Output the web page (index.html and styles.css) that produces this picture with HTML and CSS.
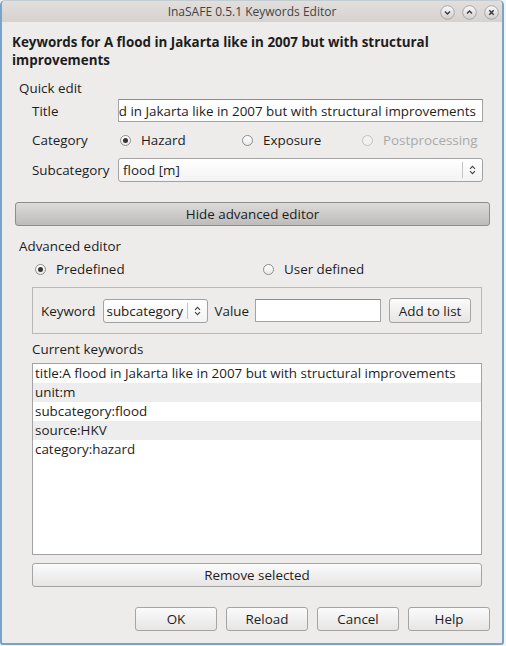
FILE: index.html
```html
<!DOCTYPE html>
<html>
<head>
<meta charset="utf-8">
<link rel="stylesheet" href="styles.css">
</head>
<body>
<div class="window">
  <div class="titlebar">
    <span></span>
    <span class="wtitle">InaSAFE 0.5.1 Keywords Editor</span>
    <div class="wbtns">
      <svg class="wbtn" width="15" height="15" viewBox="0 0 15 15"><defs><linearGradient id="g" x1="0" y1="0" x2="0" y2="1"><stop offset="0" stop-color="#fbfbfb"/><stop offset="1" stop-color="#cfcdcb"/></linearGradient></defs><circle cx="7.5" cy="7.5" r="6.8" fill="url(#g)" stroke="#a9a7a5"/><path d="M5 6.5 L7.5 9 L10 6.5" fill="none" stroke="#3a3a3a" stroke-width="1.4"/></svg>
      <svg class="wbtn" width="15" height="15" viewBox="0 0 15 15"><circle cx="7.5" cy="7.5" r="6.8" fill="url(#g)" stroke="#a9a7a5"/><path d="M5 8.5 L7.5 6 L10 8.5" fill="none" stroke="#3a3a3a" stroke-width="1.4"/></svg>
      <svg class="wbtn" width="15" height="15" viewBox="0 0 15 15"><circle cx="7.5" cy="7.5" r="6.8" fill="url(#g)" stroke="#a9a7a5"/><path d="M5.3 5.3 L9.7 9.7 M9.7 5.3 L5.3 9.7" fill="none" stroke="#3a3a3a" stroke-width="1.5"/></svg>
    </div>
  </div>
  <div class="body">
    <div class="heading">Keywords for A flood in Jakarta like in 2007 but with structural improvements</div>
    <div class="section">Quick edit</div>
    <div class="row first">
      <span class="lbl">Title</span>
      <div class="textfield"><span>title:A flood in Jakarta like in 2007 but with structural improvements</span></div>
    </div>
    <div class="row cat">
      <span class="lbl">Category</span>
      <div class="radios">
        <span class="ritem"><span class="radio on"></span>Hazard</span>
        <span class="ritem"><span class="radio"></span>Exposure</span>
        <span class="ritem disabled"><span class="radio"></span>Postprocessing</span>
      </div>
    </div>
    <div class="row sub">
      <span class="lbl">Subcategory</span>
      <div class="combo wide-combo"><span class="cval">flood [m]</span><span class="spin"><svg width="7" height="10" viewBox="0 0 7 10"><path d="M1 3.8 L3.5 1.3 L6 3.8 M1 6.2 L3.5 8.7 L6 6.2" fill="none" stroke="#444" stroke-width="1.1"/></svg></span></div>
    </div>
    <div class="btn toggle">Hide advanced editor</div>
    <div class="section adv">Advanced editor</div>
    <div class="advradios">
      <span class="ritem"><span class="radio on"></span>Predefined</span>
      <span class="ritem"><span class="radio"></span>User defined</span>
    </div>
    <div class="group">
      <span>Keyword</span>
      <div class="combo kcombo"><span class="cval">subcategory</span><span class="spin"><svg width="7" height="10" viewBox="0 0 7 10"><path d="M1 3.8 L3.5 1.3 L6 3.8 M1 6.2 L3.5 8.7 L6 6.2" fill="none" stroke="#444" stroke-width="1.1"/></svg></span></div>
      <span>Value</span>
      <div class="textfield vfield"></div>
      <div class="btn addbtn">Add to list</div>
    </div>
    <div class="sublabel">Current keywords</div>
    <div class="list">
      <div class="item">title:A flood in Jakarta like in 2007 but with structural improvements</div>
      <div class="item alt">unit:m</div>
      <div class="item">subcategory:flood</div>
      <div class="item alt">source:HKV</div>
      <div class="item">category:hazard</div>
    </div>
    <div class="btn remove">Remove selected</div>
    <div class="footer">
      <div class="btn fbtn">OK</div>
      <div class="btn fbtn">Reload</div>
      <div class="btn fbtn">Cancel</div>
      <div class="btn fbtn">Help</div>
    </div>
  </div>
</div>
</body>
</html>
```
FILE: styles.css
```css
* { box-sizing: border-box; }
html, body { margin: 0; padding: 0; }
body {
  width: 506px;
  height: 646px;
  overflow: hidden;
  background: #f4f4f4;
  font-family: "Open Sans", "Noto Sans", sans-serif;
  font-size: 13.4px;
  color: #1d1d1d;
}
.window {
  width: 504px;
  height: 645px;
  border: 2px solid #76a4ca;
  border-top: 1px solid #c4ccd3;
  border-radius: 5px 5px 3px 3px;
  background: #edeceb;
  display: flex;
  flex-direction: column;
  overflow: hidden;
}
.titlebar {
  height: 21px;
  flex: none;
  background: linear-gradient(#e1dedb, #d5d2cf);
  display: grid;
  grid-template-columns: 1fr auto 1fr;
  align-items: center;
}
.wtitle { font-size: 12px; color: #444; }
.wbtns { justify-self: end; display: flex; gap: 7px; margin-right: 3px; margin-top: 1px; }
.wbtn { display: block; }
.body { flex: 1; display: flex; flex-direction: column; }
.heading {
  font-weight: bold;
  line-height: 18px;
  margin: 11px 20px 0 10px;
}
.section { margin: 10px 0 0 17px; line-height: 18px; }
.row { display: flex; align-items: center; margin: 7px 19px 0 30px; }
.row.first { margin-top: 2px; height: 23px; }
.row.cat { height: 22px; }
.row.sub { height: 24px; }
.lbl { width: 86px; flex: none; }
.textfield {
  flex: 1;
  height: 23px;
  background: #fff;
  border: 1px solid #a3a3a3;
  border-top-color: #8e8e8e;
  display: flex;
  align-items: center;
  justify-content: flex-end;
  overflow: hidden;
  white-space: nowrap;
  padding: 0 6px 0 2px;
}
.textfield span { flex: none; }
.radios {
  display: grid;
  grid-template-columns: 122px 120px 1fr;
  margin-left: 2px;
}
.ritem { display: flex; align-items: center; gap: 10px; }
.ritem.disabled { color: #a9a9a9; }
.radio {
  flex: none;
  width: 11px;
  height: 11px;
  border-radius: 50%;
  border: 1px solid #8d8d8d;
  background: linear-gradient(#ffffff, #e9e9e9);
  display: flex;
  align-items: center;
  justify-content: center;
}
.ritem.disabled .radio { border-color: #c2c2c2; background: #f1f1f0; }
.radio.on::after {
  content: "";
  width: 5px;
  height: 5px;
  border-radius: 50%;
  background: #353535;
}
.combo {
  height: 24px;
  border: 1px solid #a2a2a2;
  border-radius: 3px;
  background: linear-gradient(#ffffff, #f3f3f3);
  display: flex;
  align-items: center;
}
.wide-combo { flex: 1; }
.cval { flex: 1; padding-left: 4px; white-space: nowrap; overflow: hidden; }
.spin {
  width: 20px;
  height: 16px;
  border-left: 1px solid #c4c4c4;
  display: flex;
  align-items: center;
  justify-content: center;
}
.spin svg { display: block; }
.btn {
  height: 24px;
  border: 1px solid #a4a4a4;
  border-radius: 3px;
  background: linear-gradient(#fbfbfb, #e6e5e4);
  display: flex;
  align-items: center;
  justify-content: center;
  white-space: nowrap;
}
.toggle {
  margin: 20px 12px 0 13px;
  background: linear-gradient(#dcdbda, #bdbcbb);
  border-color: #8c8d90;
}
.section.adv { margin-top: 11px; }
.advradios {
  display: grid;
  grid-template-columns: 228px 1fr;
  margin: 5px 0 0 33px;
  height: 18px;
  align-items: center;
}
.group {
  margin: 9px 20px 0 30px;
  height: 47px;
  border: 1px solid #b9b8b7;
  display: flex;
  align-items: center;
  padding: 0 10px 0 8px;
}
.kcombo { width: 106px; margin: 0 6px 0 7px; }
.kcombo .cval { padding-left: 3px; }
.vfield { flex: none; width: 126px; height: 23px; margin-left: 6px; }
.addbtn { width: 82px; margin-left: 8px; height: 25px; }
.sublabel { margin: 6px 0 0 30px; line-height: 18px; }
.list {
  margin: 5px 20px 0 30px;
  height: 192px;
  background: #fff;
  border: 1px solid #a3a3a3;
}
.item { height: 19px; line-height: 19px; padding-left: 2px; white-space: nowrap; }
.item.alt { background: #ededed; }
.remove { margin: 8px 20px 0 30px; }
.footer {
  display: flex;
  justify-content: flex-end;
  gap: 9px;
  margin: 20px 12px 0 0;
}
.fbtn { width: 82px; }
```
